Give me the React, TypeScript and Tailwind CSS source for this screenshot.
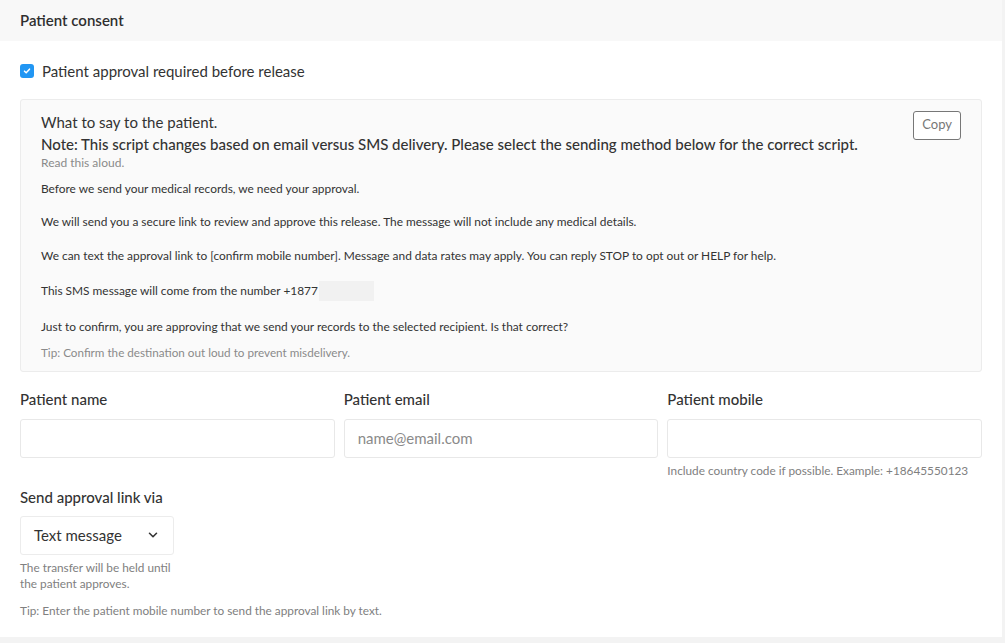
import React from 'react';

const paragraphs = [
  'Before we send your medical records, we need your approval.',
  'We will send you a secure link to review and approve this release. The message will not include any medical details.',
  'We can text the approval link to [confirm mobile number]. Message and data rates may apply. You can reply STOP to opt out or HELP for help.',
];

function Field({ label, placeholder, hint }: { label: string; placeholder?: string; hint?: string }) {
  return (
    <div className="flex flex-col">
      <label className="text-[15px] font-medium text-[#333] leading-5 h-5">{label}</label>
      <input
        placeholder={placeholder}
        className="mt-[10px] h-[39px] w-full rounded-[3px] border border-[#e8e8e8] bg-white px-[13px] text-[15px] text-[#333] placeholder:text-[#8a8a8a] outline-none"
      />
      {hint && <p className="mt-[5px] text-[11.8px] leading-4 text-[#808080]">{hint}</p>}
    </div>
  );
}

export default function App() {
  return (
    <div className="min-h-[643px] bg-[#f3f3f3] font-['Lato','Noto_Sans',sans-serif] text-[#333]">
      <div className="mr-[3px] h-[637px] bg-white">
        <div className="flex h-[41px] items-center bg-[#f8f8f8] px-5">
          <h2 className="text-[15px] font-semibold text-[#2f2f2f]">Patient consent</h2>
        </div>

        <div className="px-5">
          <label className="mt-[19px] flex items-center gap-2">
            <span className="flex h-[14px] w-[14px] items-center justify-center rounded-[3px] bg-[#2196f3]">
              <svg viewBox="0 0 12 12" className="h-[10px] w-[10px]" fill="none" stroke="white" strokeWidth="1.8" strokeLinecap="round" strokeLinejoin="round">
                <path d="M3 6.2l2 2 4-4.4" />
              </svg>
            </span>
            <span className="text-[15px] text-[#333]">Patient approval required before release</span>
          </label>

          <div className="mt-[16px] rounded-[3px] border border-[#ececec] bg-[#fafafa] px-5 pt-[11px] pb-[11px]">
            <div className="flex justify-between">
              <div>
                <p className="text-[15px] leading-[22px] text-[#333]">What to say to the patient.</p>
                <p className="text-[15px] font-medium leading-[22px] text-[#333]">
                  Note: This script changes based on email versus SMS delivery. Please select the sending method below for the correct script.
                </p>
              </div>
              <button className="h-[29px] shrink-0 rounded-[3px] border border-[#777] bg-white px-[8px] text-[13px] text-[#777]">
                Copy
              </button>
            </div>
            <p className="text-[12px] leading-4 text-[#8a8a8a]">Read this aloud.</p>
            <div className="mt-[10px] flex flex-col gap-[17.5px] text-[11.9px] leading-4 text-[#333]">
              {paragraphs.map((p) => (
                <p key={p}>{p}</p>
              ))}
              <p className="flex items-center">
                This SMS message will come from the number +1877
                <span className="ml-px inline-block h-5 w-[55px] bg-[#f1f1f1]" />
              </p>
              <p>Just to confirm, you are approving that we send your records to the selected recipient. Is that correct?</p>
            </div>
            <p className="mt-[9px] text-[11.7px] leading-4 text-[#8a8a8a]">Tip: Confirm the destination out loud to prevent misdelivery.</p>
          </div>

          <div className="mt-[17px] grid grid-cols-3 gap-[9px]">
            <Field label="Patient name" />
            <Field label="Patient email" placeholder="name@email.com" />
            <Field label="Patient mobile" hint="Include country code if possible. Example: +18645550123" />
          </div>

          <div className="mt-[8px]">
            <p className="text-[15px] font-medium leading-5 text-[#333]">Send approval link via</p>
            <button className="mt-[9px] flex h-[39px] w-[154px] items-center justify-between rounded-[3px] border border-[#ececec] bg-white pl-[13px] pr-[13px] text-[15px] text-[#333]">
              Text message
              <svg viewBox="0 0 16 16" className="h-[14px] w-[14px]" fill="none" stroke="#333" strokeWidth="1.8" strokeLinecap="round" strokeLinejoin="round">
                <path d="M4 6l4 4 4-4" />
              </svg>
            </button>
            <p className="mt-[5px] w-[160px] text-[11.8px] leading-4 text-[#808080]">The transfer will be held until the patient approves.</p>
            <p className="mt-[11px] text-[11.8px] leading-4 text-[#808080]">Tip: Enter the patient mobile number to send the approval link by text.</p>
          </div>
        </div>
      </div>
    </div>
  );
}
